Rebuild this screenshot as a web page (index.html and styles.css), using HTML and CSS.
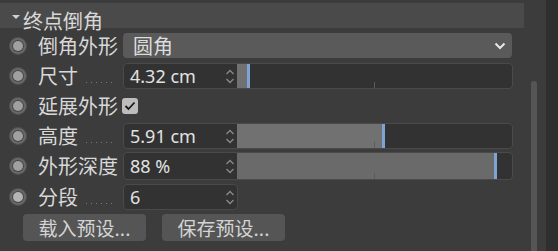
FILE: index.html
```html
<!DOCTYPE html>
<html lang="zh">
<head>
<meta charset="utf-8">
<link rel="stylesheet" href="styles.css">
</head>
<body>
<div class="page">
  <div class="main">
    <div class="header"><span class="tri"></span><span class="htext">终点倒角</span></div>
    <div class="rows">
      <div class="row">
        <span class="radio"><span class="dot"></span></span>
        <span class="label">倒角外形</span>
        <div class="select"><span class="sel-text">圆角</span>
          <svg class="chev" width="12" height="8" viewBox="0 0 12 8"><path d="M1.5 1.5 L6 6 L10.5 1.5" fill="none" stroke="#e8e8e8" stroke-width="2"/></svg>
        </div>
      </div>
      <div class="row">
        <span class="radio"><span class="dot"></span></span>
        <span class="label">尺寸<span class="leader"></span></span>
        <div class="field slider">
          <div class="num"><span class="val">4.32 cm</span>
            <svg class="spin" width="10" height="15" viewBox="0 0 10 15"><path d="M1.5 5 L5 1.5 L8.5 5 M1.5 10 L5 13.5 L8.5 10" fill="none" stroke="#8a8a8a" stroke-width="1.3"/></svg>
          </div>
          <div class="track"><div class="fill" style="width:10px"></div><span class="handle"></span><span class="tick"></span></div>
        </div>
      </div>
      <div class="row">
        <span class="radio"><span class="dot"></span></span>
        <span class="label auto">延展外形</span>
        <span class="check"><svg width="12" height="10" viewBox="0 0 12 10"><path d="M1.5 5 L4.5 8 L10.5 1.5" fill="none" stroke="#1a1a1a" stroke-width="1.8"/></svg></span>
      </div>
      <div class="row">
        <span class="radio"><span class="dot"></span></span>
        <span class="label">高度<span class="leader"></span></span>
        <div class="field slider">
          <div class="num"><span class="val">5.91 cm</span>
            <svg class="spin" width="10" height="15" viewBox="0 0 10 15"><path d="M1.5 5 L5 1.5 L8.5 5 M1.5 10 L5 13.5 L8.5 10" fill="none" stroke="#8a8a8a" stroke-width="1.3"/></svg>
          </div>
          <div class="track"><div class="fill" style="width:145px"></div><span class="handle"></span><span class="tick"></span></div>
        </div>
      </div>
      <div class="row">
        <span class="radio"><span class="dot"></span></span>
        <span class="label">外形深度</span>
        <div class="field slider tall">
          <div class="num"><span class="val">88 %</span>
            <svg class="spin" width="10" height="15" viewBox="0 0 10 15"><path d="M1.5 5 L5 1.5 L8.5 5 M1.5 10 L5 13.5 L8.5 10" fill="none" stroke="#8a8a8a" stroke-width="1.3"/></svg>
          </div>
          <div class="track"><div class="fill fill2" style="width:257px"></div><span class="handle"></span><span class="tick"></span></div>
        </div>
      </div>
      <div class="row seg">
        <span class="radio bright"><span class="dot"></span></span>
        <span class="label">分段<span class="leader"></span></span>
        <div class="field small">
          <div class="num"><span class="val">6</span>
            <svg class="spin" width="10" height="15" viewBox="0 0 10 15"><path d="M1.5 5 L5 1.5 L8.5 5 M1.5 10 L5 13.5 L8.5 10" fill="none" stroke="#8a8a8a" stroke-width="1.3"/></svg>
          </div>
        </div>
      </div>
      <div class="buttons">
        <button class="btn">载入预设...</button>
        <button class="btn">保存预设...</button>
      </div>
    </div>
  </div>
  <div class="scroll"><div class="thumb"></div></div>
  <div class="edge"></div>
</div>
</body>
</html>
```
FILE: styles.css
```css
html, body {
  margin: 0;
  padding: 0;
  background: #3c3c3c;
}
.page {
  display: flex;
  width: 558px;
  height: 251px;
  overflow: hidden;
  font-family: "Noto Sans CJK SC", "Noto Sans", sans-serif;
  color: #d6d6d6;
}
.main {
  width: 524px;
  flex: none;
}
.header {
  margin-top: 3px;
  height: 25px;
  background: #4a4a4a;
  display: flex;
  align-items: center;
}
.tri {
  width: 0;
  height: 0;
  border-left: 4px solid transparent;
  border-right: 4px solid transparent;
  border-top: 4px solid #d0d0d0;
  margin-left: 12px;
  margin-right: 3px;
  margin-top: 2px;
}
.htext {
  font-size: 20px;
  line-height: 20px;
  margin-top: 10px;
  color: #d8d8d8;
}
.rows {
  padding-top: 5px;
  padding-left: 9px;
  display: flex;
  flex-direction: column;
  gap: 4px;
}
.row {
  display: flex;
  align-items: center;
  height: 26px;
}
.row.seg {
  margin-top: 1px;
}
.radio {
  width: 18px;
  height: 18px;
  box-sizing: border-box;
  border-radius: 50%;
  background: #686868;
  border: 1px solid #505050;
  display: flex;
  align-items: center;
  justify-content: center;
  margin-right: 11px;
  flex: none;
}
.radio .dot {
  width: 10px;
  height: 10px;
  border-radius: 50%;
  background: #a0a0a0;
  box-shadow: 0 0 0 1px #474747;
}
.radio.bright .dot {
  background: #b4b4b4;
}
.label {
  width: 85px;
  flex: none;
  font-size: 20px;
  line-height: 26px;
  display: flex;
  align-items: center;
  color: #d8d8d8;
}
.label.auto {
  width: auto;
  margin-right: 4px;
}
.leader {
  flex: none;
  width: 30px;
  height: 1px;
  margin-left: 8px;
  margin-top: 12px;
  background: repeating-linear-gradient(to right, #7a7a7a 0 1px, transparent 1px 5px);
}
.select {
  width: 389px;
  height: 25px;
  margin-top: -1px;
  background: #5a5a5a;
  border-radius: 4px;
  display: flex;
  align-items: center;
  justify-content: space-between;
  box-sizing: border-box;
  padding: 0 6px 0 10px;
  font-size: 20px;
}
.sel-text {
  color: #dcdcdc;
  line-height: 25px;
}
.field {
  height: 26px;
  box-sizing: border-box;
  border: 1px solid #4a4a4a;
  border-radius: 4px;
  background: #323232;
  display: flex;
  overflow: hidden;
}
.field.tall {
  height: 28px;
}
.field.slider {
  width: 390px;
}
.field.small {
  width: 115px;
}
.num {
  width: 113px;
  flex: none;
  display: flex;
  align-items: center;
  justify-content: space-between;
  padding: 0 2px 0 6px;
  box-sizing: border-box;
}
.val {
  font-family: "Noto Sans", "Open Sans", sans-serif;
  font-size: 18px;
  color: #e2e2e2;
  line-height: 24px;
}
.track {
  flex: 1;
  position: relative;
  display: flex;
}
.fill {
  background: #717171;
  height: 100%;
}
.fill2 {
  background: #6a6a6a;
}
.handle {
  width: 3px;
  height: 100%;
  background: #7fa3d4;
}
.tick {
  position: absolute;
  left: 137px;
  bottom: 0;
  width: 1px;
  height: 6px;
  background: #5c5c5c;
}
.check {
  width: 16px;
  height: 16px;
  border-radius: 3px;
  background: #bdbdbd;
  display: flex;
  align-items: center;
  justify-content: center;
}
.buttons {
  display: flex;
  gap: 16px;
  padding-left: 14px;
  margin-top: 0;
}
.btn {
  width: 123px;
  height: 27px;
  border: none;
  border-radius: 4px;
  background: #555555;
  color: #d4d4d4;
  font-family: "Noto Sans CJK SC", sans-serif;
  font-size: 19px;
  line-height: 27px;
  padding: 0;
}
.scroll {
  width: 22px;
  flex: none;
  position: relative;
  background: #3c3c3c;
}
.thumb {
  position: absolute;
  left: 7px;
  top: 81px;
  width: 6px;
  bottom: 0;
  background: #555555;
  border-radius: 3px 3px 0 0;
}
.edge {
  flex: 1;
  background: #2f2f2f;
}
```
